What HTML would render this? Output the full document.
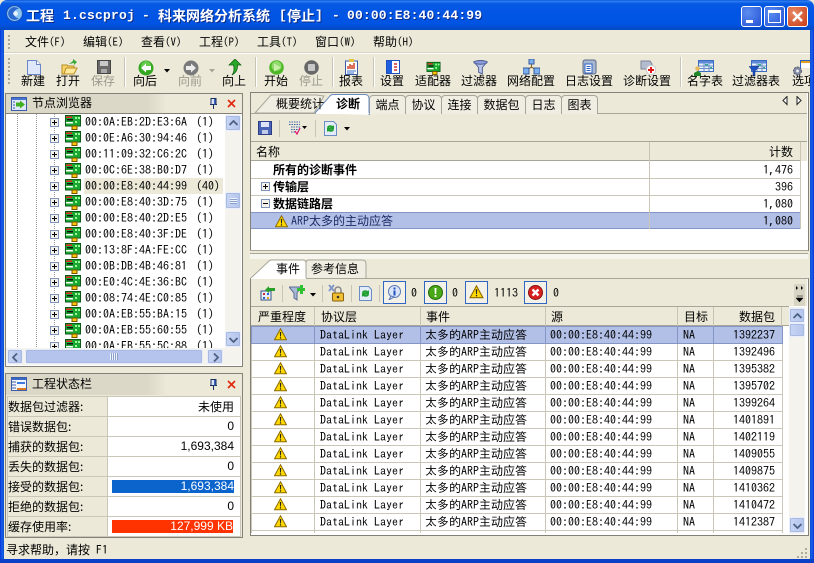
<!DOCTYPE html>
<html><head><meta charset="utf-8"><style>
html,body{margin:0;padding:0;background:#fff}
#w{position:relative;width:814px;height:563px;overflow:hidden;background:#ece9d8;font:12px/14px "WenQuanYi Zen Hei","Noto Sans CJK SC","Liberation Sans",sans-serif;color:#000}
#w div,#w span.a,#w svg.a{position:absolute}
.t{position:absolute;white-space:nowrap;line-height:14px}
.c{transform:translateX(-50%)}
.g{color:#9c9a8e}
.m{font-family:IPAGothic,"Liberation Mono",monospace}
.s{background:#c9c5b6;height:30px;top:57px;border-right:1px solid #fff;width:1px}
.tab{background:#f0eee2;border:1px solid #a8a698;border-bottom:none;border-radius:4px 4px 0 0;height:18px;top:95px;text-align:center;line-height:18px;box-sizing:content-box}
.sb{background:linear-gradient(90deg,#c8d6f4,#b4c5ec);border:1px solid #e8eefb;border-radius:2px;box-shadow:0 0 0 1px #a9b9e0 inset;box-sizing:border-box}
.hl{background:#c9c5b6}
.box{border:1px solid #2e66c2;box-sizing:border-box;width:23px;height:23px;top:281px;background:#f4f2e8}
table{position:absolute;border-collapse:collapse;table-layout:fixed;font-size:12px}
td{padding:0;white-space:nowrap;overflow:hidden;border:1px solid #cac6b8}
#ev{left:252px;top:326px;width:531px;background:#fff}
#ev tr{height:17px}
#ev td{line-height:16px;padding-left:5px;box-sizing:border-box;height:17px}
#ev td:nth-child(3),#ev td:nth-child(4){padding-left:4px}
#ev td.r{text-align:right;padding-right:7px;padding-left:0}
#ev tr.sel td{background:#b2c0e8;border-color:#8496c4}
#st{left:7px;top:396px;width:233px;background:#fff}
#st td{height:19px;line-height:19px;box-sizing:border-box}
#st td.l{background:#ece9d8;padding-left:0}
#st td.r{text-align:right;padding-right:6px;font-family:"Liberation Sans",sans-serif;font-size:12px}
#tree .t{word-spacing:3px}
</style></head><body><div id="w">
<svg width="0" height="0" style="position:absolute"><defs>
<symbol id="war" viewBox="0 0 13 13"><path d="M6.500 .8 12.500 11.800H.5Z" fill="#ffd800" stroke="#8a6a00"/><path d="M5.800 4h1.400l-.3 4.500h-.8Z M5.900 9.300h1.200v1.300H5.900Z" fill="#222"/></symbol>
<symbol id="nic" viewBox="0 0 16 16"><rect x=".5" y="1.500" width="15" height="10.500" fill="#1aa832" stroke="#0a5a16"/><rect x="1" y="2.500" width="6" height="1.500" fill="#e22"/><rect x="2" y="5" width="6" height="1.500" fill="#111"/><rect x="1" y="8" width="7" height="1.500" fill="#fff"/><rect x="10" y="3" width="2" height="2" fill="#9f9"/><rect x="13" y="3" width="2" height="2" fill="#9f9"/><rect x="10" y="7" width="2" height="2" fill="#9f9"/><rect x="7" y="12" width="5" height="3.500" fill="#ffc800" stroke="#750"/></symbol>
<symbol id="plus" viewBox="0 0 9 9"><rect x=".5" y=".5" width="8" height="8" fill="#f4f2ea" stroke="#7b93b9"/><path d="M2 4.500h5M4.500 2v5" stroke="#000"/></symbol>
<symbol id="pin" viewBox="0 0 9 11"><path d="M2 .5h5v6H2zM1 6.500h7M4.500 7v4" fill="#dbe4f8" stroke="#17305e"/><rect x="5" y="1" width="1.500" height="5.500" fill="#3b62c4"/></symbol>
<symbol id="x" viewBox="0 0 9 9"><path d="M1 1 8 8M8 1 1 8" stroke="#e02a10" stroke-width="1.700"/></symbol>
<symbol id="up" viewBox="0 0 9 6"><path d="M.5 5 4.500 1 8.500 5" fill="none" stroke="#4d6185" stroke-width="1.800"/></symbol>
<symbol id="dn" viewBox="0 0 9 6"><path d="M.5 1 4.500 5 8.500 1" fill="none" stroke="#4d6185" stroke-width="1.800"/></symbol>
<symbol id="lf" viewBox="0 0 6 9"><path d="M5 .5 1 4.500 5 8.500" fill="none" stroke="#4d6185" stroke-width="1.800"/></symbol>
<symbol id="rt" viewBox="0 0 6 9"><path d="M1 .5 5 4.500 1 8.500" fill="none" stroke="#4d6185" stroke-width="1.800"/></symbol>
<symbol id="tbl" viewBox="0 0 16 12"><rect x=".5" y=".5" width="15" height="11" fill="#e8f0fc" stroke="#3c6cc0"/><rect x="1" y="1" width="14" height="2.500" fill="#5a8ad8"/><path d="M6 3v8M11 3v8M1 6h14M1 8.500h14" stroke="#6c8cc8"/><rect x="7" y="4" width="3" height="1.500" fill="#3a8"/><rect x="12" y="7" width="2" height="1.500" fill="#3a8"/></symbol>
<symbol id="fil" viewBox="0 0 16 16"><path d="M1 2h14L10 8v7L6 13V8Z" fill="#b8c4e8" stroke="#4c5c94"/><ellipse cx="8" cy="2.500" rx="7" ry="2" fill="#8c9cd8" stroke="#4c5c94"/></symbol>
</defs></svg>

<!-- title -->
<div style="left:0;top:0;width:814px;height:30px;background:linear-gradient(#0a56dc 0,#2f7df0 4%,#0759e3 12%,#0155e4 50%,#0054e3 80%,#0248c0 100%);border-radius:7px 7px 0 0"></div>
<svg class="a" style="left:6px;top:5px" width="17" height="17" viewBox="0 0 16 16"><circle cx="8" cy="8" r="7.500" fill="#8cc4f0" stroke="#1a50b8"/><path d="M12 3.500A6 6 0 1 0 12 12.500 4.500 4.500 0 1 1 12 3.500" fill="#2a68d0"/><circle cx="9" cy="8" r="2.200" fill="#e8f4ff"/></svg>
<div style="left:0;top:0;width:814px;height:30px;color:#fff;text-shadow:1px 1px 0 #0a2c88;font-weight:bold">
<span class="t" style="left:26px;top:9px;font-size:14px">工程</span>
<span class="t" style="left:63px;top:9px;font:bold 13px/14px 'Liberation Mono',monospace;letter-spacing:.2px">1.cscproj</span>
<span class="t" style="left:142px;top:9px;font:bold 13px/14px 'Liberation Mono',monospace">-</span>
<span class="t" style="left:158px;top:9px;font-size:14px">科来网络分析系统</span>
<span class="t" style="left:279px;top:9px;font:bold 13px/14px 'Liberation Mono',monospace">[</span>
<span class="t" style="left:287px;top:9px;font-size:14px">停止</span>
<span class="t" style="left:315px;top:9px;font:bold 13px/14px 'Liberation Mono',monospace">]</span>
<span class="t" style="left:332px;top:9px;font:bold 13px/14px 'Liberation Mono',monospace">-</span>
<span class="t" style="left:347px;top:9px;font:bold 13px/14px 'Liberation Mono',monospace;letter-spacing:.15px">00:00:E8:40:44:99</span>
</div>
<div style="left:741px;top:6px;width:21px;height:21px;box-sizing:border-box;border:1px solid #fff;border-radius:3px;background:radial-gradient(circle at 30% 30%,#5a8cf0,#2452d4)"><div style="left:4px;bottom:3px;width:7px;height:3px;background:#fff"></div></div>
<div style="left:764px;top:6px;width:21px;height:21px;box-sizing:border-box;border:1px solid #fff;border-radius:3px;background:radial-gradient(circle at 30% 30%,#5a8cf0,#2452d4)"><div style="left:3px;top:3px;width:13px;height:13px;box-sizing:border-box;border:1px solid #fff;border-top-width:3px"></div></div>
<div style="left:787px;top:6px;width:21px;height:21px;box-sizing:border-box;border:1px solid #fff;border-radius:3px;background:radial-gradient(circle at 30% 30%,#e88a68,#c83a14)"><svg class="a" style="left:3px;top:3px" width="13" height="13" viewBox="0 0 13 13"><path d="M2 2 11 11M11 2 2 11" stroke="#fff" stroke-width="2.400"/></svg></div>
<!-- blue borders -->
<div style="left:0;top:30px;width:4px;height:533px;background:linear-gradient(90deg,#0831d9,#1660e8 50%,#0a4cd0)"></div>
<div style="left:810px;top:30px;width:4px;height:533px;background:linear-gradient(270deg,#0831d9,#1660e8 50%,#0a4cd0)"></div>
<div style="left:0;top:559px;width:814px;height:4px;background:#0a3fc8"></div>
<!-- menu -->
<div style="left:4px;top:30px;width:806px;height:22px;background:#ece9d8;border-bottom:1px solid #d8d4c4"></div>
<div style="left:4px;top:53px;width:806px;height:1px;background:#fff"></div>
<div style="left:8px;top:35px;width:2px;height:14px;background:repeating-linear-gradient(#a8a698 0 2px,transparent 2px 4px)"></div>
<div style="left:8px;top:58px;width:2px;height:27px;background:repeating-linear-gradient(#a8a698 0 2px,transparent 2px 4px)"></div>
<span class="t" style="left:25px;top:35px">文件<span class="m" style="font-size:11px">(F)</span></span>
<span class="t" style="left:83px;top:35px">编辑<span class="m" style="font-size:11px">(E)</span></span>
<span class="t" style="left:141px;top:35px">查看<span class="m" style="font-size:11px">(V)</span></span>
<span class="t" style="left:199px;top:35px">工程<span class="m" style="font-size:11px">(P)</span></span>
<span class="t" style="left:257px;top:35px">工具<span class="m" style="font-size:11px">(T)</span></span>
<span class="t" style="left:315px;top:35px">窗口<span class="m" style="font-size:11px">(W)</span></span>
<span class="t" style="left:373px;top:35px">帮助<span class="m" style="font-size:11px">(H)</span></span>
<!-- toolbar -->
<div class="s" style="left:124px"></div><div class="s" style="left:255px"></div><div class="s" style="left:332px"></div><div class="s" style="left:373px"></div><div class="s" style="left:680px"></div>
<span class="t c" style="left:33px;top:74px">新建</span><span class="t c" style="left:68px;top:74px">打开</span><span class="t c g" style="left:103px;top:74px">保存</span><span class="t c" style="left:145px;top:74px">向后</span><span class="t c g" style="left:190px;top:74px">向前</span><span class="t c" style="left:234px;top:74px">向上</span><span class="t c" style="left:276px;top:74px">开始</span><span class="t c g" style="left:311px;top:74px">停止</span><span class="t c" style="left:351px;top:74px">报表</span><span class="t c" style="left:392px;top:74px">设置</span><span class="t c" style="left:433px;top:74px">适配器</span><span class="t c" style="left:479px;top:74px">过滤器</span><span class="t c" style="left:531px;top:74px">网络配置</span><span class="t c" style="left:589px;top:74px">日志设置</span><span class="t c" style="left:647px;top:74px">诊断设置</span><span class="t c" style="left:705px;top:74px">名字表</span><span class="t c" style="left:756px;top:74px">过滤器表</span><span class="t" style="left:792px;top:74px;width:18px;overflow:hidden">选项</span>
<!-- toolbar icons -->
<svg class="a" style="left:27px;top:60px" width="14" height="15" viewBox="0 0 14 15"><path d="M.5.5h9l4 4v10H.5Z" fill="#dfe8fa" stroke="#6a86c8"/><path d="M9.500.5v4h4" fill="#fff" stroke="#6a86c8"/></svg>
<svg class="a" style="left:61px;top:59px" width="17" height="16" viewBox="0 0 17 16"><path d="M1 15V6h5l1 1h6v8Z" fill="#f8d468" stroke="#b88c20"/><path d="M3 15 5 9h11l-3 6Z" fill="#ffe89a" stroke="#b88c20"/><path d="M8 5 12 2V0l4 3-3 3V4Z" fill="#38a838"/></svg>
<svg class="a" style="left:97px;top:60px" width="14" height="14" viewBox="0 0 14 14"><rect x=".5" y=".5" width="13" height="13" fill="#6a6a6a" stroke="#444"/><rect x="3" y="1" width="8" height="5" fill="#c8c8c8"/><rect x="4" y="9" width="6" height="4" fill="#a8a8a8"/></svg>
<svg class="a" style="left:138px;top:60px" width="16" height="16" viewBox="0 0 16 16"><circle cx="8" cy="8" r="7.500" fill="#34a821"/><circle cx="8" cy="6" r="5" fill="#7ed860" opacity=".7"/><path d="M3 8 8 3.500V6h5v4H8v2.500Z" fill="#fff"/></svg>
<svg class="a" style="left:164px;top:69px" width="6" height="4"><path d="M0 0h6L3 3.500Z" fill="#000"/></svg>
<svg class="a" style="left:183px;top:60px" width="16" height="16" viewBox="0 0 16 16"><circle cx="8" cy="8" r="7.500" fill="#7a7a7a"/><path d="M13 8 8 3.500V6H3v4h5v2.500Z" fill="#ededed"/></svg>
<svg class="a" style="left:209px;top:69px" width="6" height="4"><path d="M0 0h6L3 3.500Z" fill="#a8a698"/></svg>
<svg class="a" style="left:228px;top:59px" width="14" height="17" viewBox="0 0 14 17"><path d="M7 0 13 6H9.500Q10 13 4 16 7 12 5.500 6H1Z" fill="#28a828" stroke="#0c5c0c" stroke-width=".7"/></svg>
<svg class="a" style="left:269px;top:60px" width="15" height="15" viewBox="0 0 15 15"><circle cx="7.500" cy="7.500" r="7.300" fill="#50b828"/><circle cx="7.500" cy="6" r="5" fill="#a8e888" opacity=".7"/><path d="M5 3.500 12 7.500 5 11.500Z" fill="#c8f0a8"/></svg>
<svg class="a" style="left:304px;top:60px" width="15" height="15" viewBox="0 0 15 15"><circle cx="7.500" cy="7.500" r="7.300" fill="#686868"/><rect x="4" y="4" width="7" height="7" rx="1" fill="#c8c8c8"/></svg>
<svg class="a" style="left:345px;top:59px" width="13" height="16" viewBox="0 0 13 16"><rect x=".5" y="2" width="12" height="13.500" fill="#fff" stroke="#3a5ca8"/><rect x="4" y="0" width="5" height="3" fill="#e8c040"/><path d="M3 10V7M5 10V5M7 10V6M9 10V4" stroke="#d04020" stroke-width="1.500"/><path d="M2 12h9M2 14h7" stroke="#3a6cc8"/></svg>
<svg class="a" style="left:386px;top:60px" width="14" height="14" viewBox="0 0 14 14"><rect x=".5" y=".5" width="13" height="13" fill="#fff" stroke="#1c50c0"/><rect x="1" y="1" width="5" height="12" fill="#2060e0"/><path d="M8 4h3M8 7h3M8 10h3" stroke="#d03030" stroke-width="1.400"/></svg>
<svg class="a" style="left:426px;top:61px" width="15" height="14"><use href="#nic"/></svg>
<svg class="a" style="left:473px;top:60px" width="15" height="15"><use href="#fil"/></svg>
<svg class="a" style="left:523px;top:59px" width="17" height="16" viewBox="0 0 17 16"><path d="M8.500 4v5M3 12l5.500-4 5.500 4" stroke="#806020" fill="none"/><rect x="6" y="0" width="5" height="5" fill="#7ab0f0" stroke="#385c9c"/><rect x="0" y="9" width="6" height="6" fill="#7ab0f0" stroke="#385c9c"/><rect x="11" y="9" width="6" height="6" fill="#7ab0f0" stroke="#385c9c"/></svg>
<svg class="a" style="left:582px;top:59px" width="15" height="16" viewBox="0 0 15 16"><rect x="1" y="1" width="13" height="14" rx="2" fill="#a8b8d0" stroke="#5c6c88"/><rect x="3" y="5" width="7" height="9" fill="#fff" stroke="#2c60c0"/><path d="M4.500 7.500h4M4.500 9.500h4M4.500 11.500h4" stroke="#2c60c0"/></svg>
<svg class="a" style="left:640px;top:60px" width="16" height="15" viewBox="0 0 16 15"><path d="M1 1h9l2 3v5H1Z" fill="#b4bcd0" stroke="#7c849c"/><circle cx="11" cy="10" r="4.700" fill="#fff" stroke="#c8c8c8"/><path d="M11 7v6M8 10h6" stroke="#e01818" stroke-width="2"/></svg>
<svg class="a" style="left:698px;top:60px" width="16" height="12"><use href="#tbl"/></svg><svg class="a" style="left:694px;top:66px" width="7" height="10" viewBox="0 0 7 10"><circle cx="3.500" cy="2.500" r="2.300" fill="#e8b860"/><path d="M0 10V7l3.500-2L7 7v3Z" fill="#208828"/></svg>
<svg class="a" style="left:751px;top:60px" width="16" height="12"><use href="#tbl"/></svg><svg class="a" style="left:749px;top:66px" width="10" height="10" viewBox="0 0 10 10"><path d="M0 .5h10L6 5v5L4 9V5Z" fill="#1c50c8" stroke="#0c2c78" stroke-width=".5"/></svg>
<svg class="a" style="left:792px;top:66px" width="11" height="10" viewBox="0 0 11 10"><circle cx="5.500" cy="5" r="4" fill="#8088a0" stroke="#505870" stroke-dasharray="2 1"/><circle cx="5.500" cy="5" r="1.500" fill="#e8e8f0"/></svg>
<svg class="a" style="left:800px;top:60px" width="10" height="8"><rect x=".5" y=".5" width="14" height="9" fill="#fff" stroke="#2c60c0"/><rect x="1" y="1" width="9" height="2" fill="#e0a020"/></svg>

<!-- node panel -->
<div style="left:5px;top:93px;width:236px;height:272px;border:1px solid #848278;background:#fff"></div>
<div style="left:6px;top:94px;width:236px;height:19px;background:linear-gradient(90deg,#dcd8c8 0,#dcd8c8 60%,#ece9d8 68%);border-bottom:1px solid #848278"></div>
<svg class="a" style="left:11px;top:97px" width="16" height="14" viewBox="0 0 16 14"><rect x=".5" y=".5" width="15" height="13" fill="#dfe8fa" stroke="#3c5ca8"/><rect x="1" y="1" width="14" height="2" fill="#4474d0"/><path d="M5 5.500h4V3.500L14 7.500 9 11.500V9.500H5Z" fill="#40b020"/><path d="M2 5h2M2 8h2M2 11h2" stroke="#3c5ca8"/></svg>
<span class="t" style="left:32px;top:96px">节点浏览器</span>
<svg class="a" style="left:209px;top:98px" width="9" height="11"><use href="#pin"/></svg>
<svg class="a" style="left:227px;top:99px" width="9" height="9"><use href="#x"/></svg>
<div id="tree" style="left:6px;top:114px;width:219px;height:234px;overflow:hidden;background:#fff" class="m">
<div style="left:78px;top:64px;width:139px;height:16px;background:#ece9d8"></div>
<div style="left:11px;top:0;width:1px;height:234px;background:repeating-linear-gradient(#999 0 1px,transparent 1px 2px)"></div>
<div style="left:30px;top:0;width:1px;height:234px;background:repeating-linear-gradient(#999 0 1px,transparent 1px 2px)"></div>
<div style="left:48px;top:0;width:1px;height:234px;background:repeating-linear-gradient(#999 0 1px,transparent 1px 2px)"></div>
<span class="t" style="left:79px;top:1px">00:0A:EB:2D:E3:6A (1)</span>
<span class="t" style="left:79px;top:17px">00:0E:A6:30:94:46 (1)</span>
<span class="t" style="left:79px;top:33px">00:11:09:32:C6:2C (1)</span>
<span class="t" style="left:79px;top:49px">00:0C:6E:38:B0:D7 (1)</span>
<span class="t" style="left:79px;top:65px">00:00:E8:40:44:99 (40)</span>
<span class="t" style="left:79px;top:81px">00:00:E8:40:3D:75 (1)</span>
<span class="t" style="left:79px;top:97px">00:00:E8:40:2D:E5 (1)</span>
<span class="t" style="left:79px;top:113px">00:00:E8:40:3F:DE (1)</span>
<span class="t" style="left:79px;top:129px">00:13:8F:4A:FE:CC (1)</span>
<span class="t" style="left:79px;top:145px">00:0B:DB:4B:46:81 (1)</span>
<span class="t" style="left:79px;top:161px">00:E0:4C:4E:36:BC (1)</span>
<span class="t" style="left:79px;top:177px">00:08:74:4E:C0:85 (1)</span>
<span class="t" style="left:79px;top:193px">00:0A:EB:55:BA:15 (1)</span>
<span class="t" style="left:79px;top:209px">00:0A:EB:55:60:55 (1)</span>
<span class="t" style="left:79px;top:225px">00:0A:FB:55:5C:88 (1)</span>
<svg class="a" style="left:44px;top:0" width="32" height="234"><g>
<use href="#plus" x="0" y="4" width="9" height="9"/><use href="#nic" x="15" y="0" width="16" height="16"/>
<use href="#plus" x="0" y="20" width="9" height="9"/><use href="#nic" x="15" y="16" width="16" height="16"/>
<use href="#plus" x="0" y="36" width="9" height="9"/><use href="#nic" x="15" y="32" width="16" height="16"/>
<use href="#plus" x="0" y="52" width="9" height="9"/><use href="#nic" x="15" y="48" width="16" height="16"/>
<use href="#plus" x="0" y="68" width="9" height="9"/><use href="#nic" x="15" y="64" width="16" height="16"/>
<use href="#plus" x="0" y="84" width="9" height="9"/><use href="#nic" x="15" y="80" width="16" height="16"/>
<use href="#plus" x="0" y="100" width="9" height="9"/><use href="#nic" x="15" y="96" width="16" height="16"/>
<use href="#plus" x="0" y="116" width="9" height="9"/><use href="#nic" x="15" y="112" width="16" height="16"/>
<use href="#plus" x="0" y="132" width="9" height="9"/><use href="#nic" x="15" y="128" width="16" height="16"/>
<use href="#plus" x="0" y="148" width="9" height="9"/><use href="#nic" x="15" y="144" width="16" height="16"/>
<use href="#plus" x="0" y="164" width="9" height="9"/><use href="#nic" x="15" y="160" width="16" height="16"/>
<use href="#plus" x="0" y="180" width="9" height="9"/><use href="#nic" x="15" y="176" width="16" height="16"/>
<use href="#plus" x="0" y="196" width="9" height="9"/><use href="#nic" x="15" y="192" width="16" height="16"/>
<use href="#plus" x="0" y="212" width="9" height="9"/><use href="#nic" x="15" y="208" width="16" height="16"/>
<use href="#plus" x="0" y="228" width="9" height="9"/><use href="#nic" x="15" y="224" width="16" height="16"/>
</g></svg>
</div>
<!-- node scrollbars -->
<div style="left:225px;top:114px;width:16px;height:234px;background:#f4f3ee"></div>
<div class="sb" style="left:225px;top:115px;width:16px;height:16px"><svg class="a" style="left:3px;top:4px" width="9" height="6"><use href="#up"/></svg></div>
<div class="sb" style="left:225px;top:192px;width:16px;height:17px"><div style="left:4px;top:5px;width:7px;height:6px;background:repeating-linear-gradient(#eef3fc 0 1px,#8ca0cc 1px 2px)"></div></div>
<div class="sb" style="left:225px;top:331px;width:16px;height:16px"><svg class="a" style="left:3px;top:5px" width="9" height="6"><use href="#dn"/></svg></div>
<div style="left:6px;top:348px;width:235px;height:17px;background:#f4f3ee"></div>
<div class="sb" style="left:7px;top:349px;width:16px;height:15px"><svg class="a" style="left:4px;top:3px" width="6" height="9"><use href="#lf"/></svg></div>
<div class="sb" style="left:25px;top:349px;width:178px;height:15px;background:#b4c4ec"><div style="left:84px;top:3px;width:8px;height:7px;background:repeating-linear-gradient(90deg,#eef3fc 0 1px,#8ca0cc 1px 2px)"></div></div>
<div class="sb" style="left:207px;top:349px;width:16px;height:15px"><svg class="a" style="left:5px;top:3px" width="6" height="9"><use href="#rt"/></svg></div>
<!-- status panel -->
<div style="left:5px;top:373px;width:236px;height:163px;border:1px solid #848278;background:#ece9d8"></div>
<div style="left:6px;top:374px;width:236px;height:21px;background:linear-gradient(90deg,#dcd8c8 0,#dcd8c8 60%,#ece9d8 68%)"></div>
<svg class="a" style="left:11px;top:377px" width="16" height="14" viewBox="0 0 16 14"><rect x=".5" y=".5" width="15" height="13" fill="#f4f6fc" stroke="#3c5ca8"/><rect x="1" y="1" width="14" height="2" fill="#3c68c8"/><rect x="6" y="5" width="8" height="2" fill="#3c78e0"/><rect x="6" y="11" width="9" height="2" fill="#e07820"/><path d="M1 5h4M1 8h4M1 11h4" stroke="#3c5ca8"/></svg>
<span class="t" style="left:32px;top:377px">工程状态栏</span>
<svg class="a" style="left:209px;top:379px" width="9" height="11"><use href="#pin"/></svg>
<svg class="a" style="left:227px;top:380px" width="9" height="9"><use href="#x"/></svg>
<table id="st"><colgroup><col style="width:100px"><col style="width:133px"></colgroup>
<tr><td class="l">数据包过滤器:</td><td class="r" style="font-family:inherit">未使用</td></tr>
<tr style="height:20px"><td class="l" style="height:20px">错误数据包:</td><td class="r" style="height:20px">0</td></tr>
<tr style="height:20px"><td class="l" style="height:20px">捕获的数据包:</td><td class="r" style="height:20px">1,693,384</td></tr>
<tr style="height:20px"><td class="l" style="height:20px">丢失的数据包:</td><td class="r" style="height:20px">0</td></tr>
<tr style="height:20px"><td class="l" style="height:20px">接受的数据包:</td><td class="r" style="height:20px"></td></tr>
<tr style="height:20px"><td class="l" style="height:20px">拒绝的数据包:</td><td class="r" style="height:20px">0</td></tr>
<tr style="height:20px"><td class="l" style="height:20px">缓存使用率:</td><td class="r" style="height:20px"></td></tr>
</table>
<div style="left:112px;top:480px;width:122px;height:13px;background:#0a64cc;color:#fff;text-align:right;font:12px/13px 'Liberation Sans',sans-serif">1,693,384</div>
<div style="left:112px;top:520px;width:121px;height:13px;background:#ff3300;color:#fff;text-align:right;font:12px/13px 'Liberation Sans',sans-serif;overflow:hidden;white-space:nowrap">127,999 KB</div>
<!-- status bar -->
<span class="t" style="left:6px;top:543px">寻求帮助，请按</span><span class="t m" style="left:96px;top:543px">F1</span>
<svg class="a" style="left:797px;top:547px" width="11" height="11"><path d="M8 1h2v2H8zM4 5h2v2H4zM8 5h2v2H8zM0 9h2v2H0zM4 9h2v2H4zM8 9h2v2H8z" fill="#b0ac9c"/></svg>

<!-- upper right -->
<div style="left:250px;top:92px;width:557px;height:158px;border:1px solid #848278;border-bottom:none;background:#fff"></div>
<div style="left:251px;top:93px;width:556px;height:48px;background:#ece9d8"></div>
<div style="left:251px;top:113px;width:556px;height:1px;background:#a8a698"></div>
<div class="tab" style="left:369px;width:35px">端点</div>
<div class="tab" style="left:405px;width:35px">协议</div>
<div class="tab" style="left:441px;width:35px">连接</div>
<div class="tab" style="left:477px;width:47px">数据包</div>
<div class="tab" style="left:525px;width:35px">日志</div>
<div class="tab" style="left:561px;width:35px">图表</div>
<svg class="a" style="left:254px;top:93px" width="116" height="22" viewBox="0 0 116 22"><path d="M1 20 17 2H62L70 3 60 20Z" fill="#f0eee2" stroke="#a8a698"/><path d="M61 20 76 3Q77 1.500 79 1.500H111Q114.500 1.500 115 5V22H116" fill="#fff" stroke="#6c8cc0"/><path d="M61 20.500H1" stroke="#a8a698" fill="none"/><path d="M62 20.500H115" stroke="#fff" fill="none"/></svg>
<span class="t" style="left:276px;top:97px">概要统计</span>
<span class="t" style="left:336px;top:97px;font-weight:bold">诊断</span>
<svg class="a" style="left:782px;top:96px" width="20" height="10"><path d="M5 .5 1 4.500 5 8.500Z" fill="#fff" stroke="#222"/><path d="M15 .5 19 4.500 15 8.500Z" fill="#fff" stroke="#222"/></svg>
<svg class="a" style="left:258px;top:121px" width="14" height="14" viewBox="0 0 14 14"><rect x=".5" y=".5" width="13" height="13" fill="#4a64b8" stroke="#2c3c84"/><rect x="3" y="1" width="8" height="5" fill="#dde4f8"/><rect x="4" y="9" width="6" height="4" fill="#c0cce8"/></svg>
<div class="hl" style="left:279px;top:120px;width:1px;height:17px"></div><div class="hl" style="left:315px;top:120px;width:1px;height:17px"></div>
<svg class="a" style="left:288px;top:121px" width="20" height="15" viewBox="0 0 20 15"><path d="M1 1h11M1 3.500h11M3 6h9M3 8.500h8M3 11h5" stroke="#3c64a8" stroke-dasharray="1.500 1"/><path d="M7 10l2 3 3-6" stroke="#e01870" fill="none" stroke-width="1.200"/><path d="M14 5h5L16.500 8Z" fill="#000"/></svg>
<svg class="a" style="left:324px;top:121px" width="13" height="15" viewBox="0 0 13 15"><path d="M.5.500h9l3 3v11H.5Z" fill="#e4ecfa" stroke="#6c8cc4"/><path d="M3 6Q5 3 9 5L10 4V8H6L7 7Q5 6 4 8ZM10 9Q8 12 4 10L3 11V7H7L6 8Q8 9 9 7Z" fill="#20a030"/></svg>
<svg class="a" style="left:344px;top:127px" width="6" height="4"><path d="M0 0h6L3 3.500Z" fill="#000"/></svg>
<div style="left:251px;top:141px;width:556px;height:20px;background:#ece9d8;border-top:1px solid #a8a698;box-sizing:border-box"></div>
<div style="left:251px;top:160px;width:549px;height:1px;background:#a8a698"></div>
<div style="left:649px;top:142px;width:1px;height:19px;background:#c9c5b6"></div>
<div style="left:800px;top:142px;width:1px;height:19px;background:#c9c5b6"></div>
<span class="t" style="left:256px;top:145px">名称</span><span class="t" style="left:769px;top:145px">计数</span>
<div style="left:251px;top:178px;width:549px;height:1px;background:#cac6b8"></div>
<div style="left:251px;top:195px;width:549px;height:1px;background:#cac6b8"></div>
<div style="left:251px;top:212px;width:549px;height:1px;background:#cac6b8"></div>
<div style="left:251px;top:212px;width:549px;height:17px;background:#b2c0e8;border-top:1px solid #8496c4;border-bottom:1px solid #8496c4;box-sizing:border-box"></div>
<div style="left:649px;top:161px;width:1px;height:68px;background:#cac6b8"></div>
<div style="left:800px;top:161px;width:1px;height:68px;background:#cac6b8"></div>
<span class="t" style="left:273px;top:163px;font-weight:bold">所有的诊断事件</span>
<span class="t" style="left:273px;top:180px;font-weight:bold">传输层</span>
<span class="t" style="left:273px;top:197px;font-weight:bold">数据链路层</span>
<span class="t" style="left:291px;top:214px;color:#1c2c64"><span class="m">ARP</span>太多的主动应答</span>
<span class="t m" style="right:21px;top:163px">1,476</span><span class="t m" style="right:21px;top:180px">396</span><span class="t m" style="right:21px;top:197px">1,080</span><span class="t m" style="right:21px;top:214px">1,080</span>
<svg class="a" style="left:261px;top:182px" width="9" height="9"><use href="#plus"/></svg>
<svg class="a" style="left:261px;top:199px" width="9" height="9" viewBox="0 0 9 9"><rect x=".5" y=".5" width="8" height="8" fill="#f4f2ea" stroke="#7b93b9"/><path d="M2 4.500h5" stroke="#000"/></svg>
<svg class="a" style="left:275px;top:215px" width="13" height="13"><use href="#war"/></svg>
<!-- splitter -->
<div style="left:250px;top:250px;width:558px;height:1px;background:#a8a698"></div>
<div style="left:250px;top:253px;width:558px;height:1px;background:#a8a698"></div>
<div style="left:250px;top:254px;width:558px;height:5px;background:#f6f5ee"></div>
<!-- lower right -->
<div style="left:250px;top:278px;width:557px;height:256px;border:1px solid #848278;border-top:1px solid #a8a698;background:#fff"></div>
<div style="left:251px;top:279px;width:556px;height:27px;background:#ece9d8"></div>
<svg class="a" style="left:250px;top:259px" width="120" height="20" viewBox="0 0 120 20"><path d="M1 19 19 2Q20 1 22 1H53Q56 1 56 4V19" fill="#fff" stroke="#a8a698"/><path d="M56 19V4Q56 1 59 1H112Q116 1 116 5V19" fill="#f0eee2" stroke="#a8a698"/><path d="M1 19.500H56" stroke="#fff"/></svg>
<span class="t" style="left:276px;top:262px">事件</span><span class="t" style="left:311px;top:262px">参考信息</span>
<svg class="a" style="left:260px;top:286px" width="16" height="15" viewBox="0 0 16 15"><rect x="1" y="5" width="10" height="9" fill="#e8ecf8" stroke="#34548c"/><path d="M3 7h2v2H3z" fill="#d02c2c"/><path d="M7 7h2v2H7z" fill="#2c60d0"/><path d="M3 11h2v2H3z" fill="#2c60d0"/><path d="M7 11h2v2H7z" fill="#e0a020"/><path d="M5 4 9 0v2h6v3H9v2Z" fill="#28a028"/></svg>
<div class="hl" style="left:282px;top:285px;width:1px;height:17px"></div>
<svg class="a" style="left:289px;top:285px" width="16" height="16" viewBox="0 0 16 16"><path d="M0 2h12L8 8v7L5 13V8Z" fill="#a8b8d8" stroke="#5c6c94"/><path d="M11 0h3v3h2v3h-2v3h-3V6H8V3h3Z" fill="#30c030"/></svg>
<svg class="a" style="left:310px;top:293px" width="6" height="4"><path d="M0 0h6L3 3.500Z" fill="#000"/></svg>
<div class="hl" style="left:322px;top:285px;width:1px;height:17px"></div>
<svg class="a" style="left:328px;top:284px" width="17" height="18" viewBox="0 0 17 18"><path d="M1 1 6 7M6 1 1 7" stroke="#7c94c8" stroke-width="1.800"/><path d="M7 9V6a3 3 0 0 1 6 0v3" fill="none" stroke="#888" stroke-width="1.500"/><rect x="4.500" y="9" width="11" height="8" rx="1" fill="#f0c030" stroke="#886010"/><circle cx="10" cy="13" r="1.300" fill="#333"/></svg>
<div class="hl" style="left:351px;top:285px;width:1px;height:17px"></div>
<svg class="a" style="left:359px;top:286px" width="13" height="15" viewBox="0 0 13 15"><path d="M.5.500h9l3 3v11H.5Z" fill="#e4ecfa" stroke="#6c8cc4"/><path d="M3 6Q5 3 9 5L10 4V8H6L7 7Q5 6 4 8ZM10 9Q8 12 4 10L3 11V7H7L6 8Q8 9 9 7Z" fill="#20a030"/></svg>
<div class="hl" style="left:379px;top:285px;width:1px;height:17px"></div>
<div class="box" style="left:383px"></div><div class="box" style="left:424px"></div><div class="box" style="left:465px"></div><div class="box" style="left:524px"></div>
<svg class="a" style="left:387px;top:285px" width="15" height="15" viewBox="0 0 15 15"><circle cx="7.500" cy="6.500" r="6" fill="#d8e4f8" stroke="#5878b8"/><path d="M4 11 2 15l5-3Z" fill="#d8e4f8" stroke="#5878b8"/><path d="M6.500 5.500h2v5h-2zM6.500 2.500h2v2h-2z" fill="#2050c0"/></svg>
<svg class="a" style="left:428px;top:285px" width="15" height="15" viewBox="0 0 15 15"><circle cx="7.500" cy="7.500" r="7" fill="#48a818" stroke="#206808"/><path d="M6.500 3h2l-.3 6H6.800ZM6.600 10h1.800v2H6.600Z" fill="#fff"/></svg>
<svg class="a" style="left:469px;top:285px" width="15" height="14"><use href="#war"/></svg>
<svg class="a" style="left:528px;top:285px" width="15" height="15" viewBox="0 0 15 15"><circle cx="7.500" cy="7.500" r="7" fill="#d82020" stroke="#881010"/><path d="M4.500 4.500 10.500 10.500M10.500 4.500 4.500 10.500" stroke="#fff" stroke-width="2.400"/></svg>
<span class="t m" style="left:411px;top:286px">0</span><span class="t m" style="left:452px;top:286px">0</span><span class="t m" style="left:494px;top:286px">1113</span><span class="t m" style="left:553px;top:286px">0</span>
<div style="left:794px;top:284px;width:11px;height:22px;background:#d8d4c4"></div>
<svg class="a" style="left:796px;top:286px" width="8" height="18"><path d="M0 0l2 2-2 2zM5 0l2 2-2 2z" fill="#000"/><path d="M1 10h6M0 12h7l-3.500 4z" fill="#000" stroke="#000" stroke-width=".5"/></svg>
<!-- grid header -->
<div style="left:251px;top:306px;width:538px;height:20px;background:#ece9d8;border-top:1px solid #a8a698;border-bottom:1px solid #a8a698;box-sizing:border-box"></div>
<div class="hl" style="left:314px;top:307px;width:1px;height:19px"></div><div class="hl" style="left:420px;top:307px;width:1px;height:19px"></div><div class="hl" style="left:545px;top:307px;width:1px;height:19px"></div><div class="hl" style="left:677px;top:307px;width:1px;height:19px"></div><div class="hl" style="left:713px;top:307px;width:1px;height:19px"></div><div class="hl" style="left:781px;top:307px;width:1px;height:19px"></div>
<span class="t" style="left:258px;top:310px">严重程度</span><span class="t" style="left:321px;top:310px">协议层</span><span class="t" style="left:426px;top:310px">事件</span><span class="t" style="left:551px;top:310px">源</span><span class="t" style="left:684px;top:310px">目标</span><span class="t" style="left:739px;top:310px">数据包</span>
<!-- grid -->
<div style="left:251px;top:326px;width:532px;height:207px;overflow:hidden;background:#fff">
<table id="ev" style="left:0;top:0" class="m"><colgroup><col style="width:63px"><col style="width:106px"><col style="width:125px"><col style="width:132px"><col style="width:36px"><col style="width:69px"></colgroup>
<tr class="sel"><td></td><td>DataLink Layer</td><td>太多的ARP主动应答</td><td>00:00:E8:40:44:99</td><td>NA</td><td class="r">1392237</td></tr>
<tr><td></td><td>DataLink Layer</td><td>太多的ARP主动应答</td><td>00:00:E8:40:44:99</td><td>NA</td><td class="r">1392496</td></tr>
<tr><td></td><td>DataLink Layer</td><td>太多的ARP主动应答</td><td>00:00:E8:40:44:99</td><td>NA</td><td class="r">1395382</td></tr>
<tr><td></td><td>DataLink Layer</td><td>太多的ARP主动应答</td><td>00:00:E8:40:44:99</td><td>NA</td><td class="r">1395702</td></tr>
<tr><td></td><td>DataLink Layer</td><td>太多的ARP主动应答</td><td>00:00:E8:40:44:99</td><td>NA</td><td class="r">1399264</td></tr>
<tr><td></td><td>DataLink Layer</td><td>太多的ARP主动应答</td><td>00:00:E8:40:44:99</td><td>NA</td><td class="r">1401891</td></tr>
<tr><td></td><td>DataLink Layer</td><td>太多的ARP主动应答</td><td>00:00:E8:40:44:99</td><td>NA</td><td class="r">1402119</td></tr>
<tr><td></td><td>DataLink Layer</td><td>太多的ARP主动应答</td><td>00:00:E8:40:44:99</td><td>NA</td><td class="r">1409055</td></tr>
<tr><td></td><td>DataLink Layer</td><td>太多的ARP主动应答</td><td>00:00:E8:40:44:99</td><td>NA</td><td class="r">1409875</td></tr>
<tr><td></td><td>DataLink Layer</td><td>太多的ARP主动应答</td><td>00:00:E8:40:44:99</td><td>NA</td><td class="r">1410362</td></tr>
<tr><td></td><td>DataLink Layer</td><td>太多的ARP主动应答</td><td>00:00:E8:40:44:99</td><td>NA</td><td class="r">1410472</td></tr>
<tr><td></td><td>DataLink Layer</td><td>太多的ARP主动应答</td><td>00:00:E8:40:44:99</td><td>NA</td><td class="r">1412387</td></tr>
<tr><td></td><td></td><td></td><td></td><td></td><td></td></tr>
</table>
<svg class="a" style="left:23px;top:0" width="14" height="204"><use href="#war" x="0" y="2" width="13" height="13"/><use href="#war" x="0" y="19" width="13" height="13"/><use href="#war" x="0" y="36" width="13" height="13"/><use href="#war" x="0" y="53" width="13" height="13"/><use href="#war" x="0" y="70" width="13" height="13"/><use href="#war" x="0" y="87" width="13" height="13"/><use href="#war" x="0" y="104" width="13" height="13"/><use href="#war" x="0" y="121" width="13" height="13"/><use href="#war" x="0" y="138" width="13" height="13"/><use href="#war" x="0" y="155" width="13" height="13"/><use href="#war" x="0" y="172" width="13" height="13"/><use href="#war" x="0" y="189" width="13" height="13"/></svg>
</div>
<!-- grid scrollbar -->
<div style="left:789px;top:307px;width:16px;height:227px;background:#f4f3ee"></div>
<div class="sb" style="left:789px;top:308px;width:16px;height:15px"><svg class="a" style="left:3px;top:4px" width="9" height="6"><use href="#up"/></svg></div>
<div class="sb" style="left:789px;top:323px;width:16px;height:14px"></div>
<div class="sb" style="left:789px;top:517px;width:16px;height:16px"><svg class="a" style="left:3px;top:5px" width="9" height="6"><use href="#dn"/></svg></div>
</div></body></html>
